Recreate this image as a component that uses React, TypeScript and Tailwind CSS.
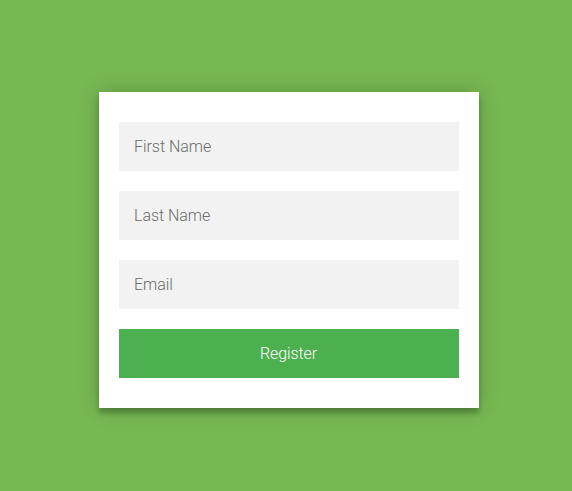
const fields = [
  { name: "firstName", label: "First Name" },
  { name: "lastName", label: "Last Name" },
  { name: "email", label: "Email" },
];

export default function App() {
  return (
    <main className="flex h-screen w-full items-start justify-center bg-[#76b852] pt-[92px] pl-[6px] font-['Roboto',sans-serif] font-light">
      <form className="flex w-[380px] flex-col gap-5 bg-white px-5 py-[30px] shadow-[0_0_20px_0_rgba(0,0,0,0.2),0_5px_5px_0_rgba(0,0,0,0.24)]">
        {fields.map((f) => (
          <input
            key={f.name}
            name={f.name}
            placeholder={f.label}
            className="h-[49px] w-full bg-[#f2f2f2] px-[15px] text-base tracking-[-0.04px] outline-none placeholder:text-[#6b6b6b]"
          />
        ))}
        <button type="button" className="h-[49px] w-full bg-[#4caf50] pr-px text-base tracking-[-0.08px] text-white">
          Register
        </button>
      </form>
    </main>
  );
}
